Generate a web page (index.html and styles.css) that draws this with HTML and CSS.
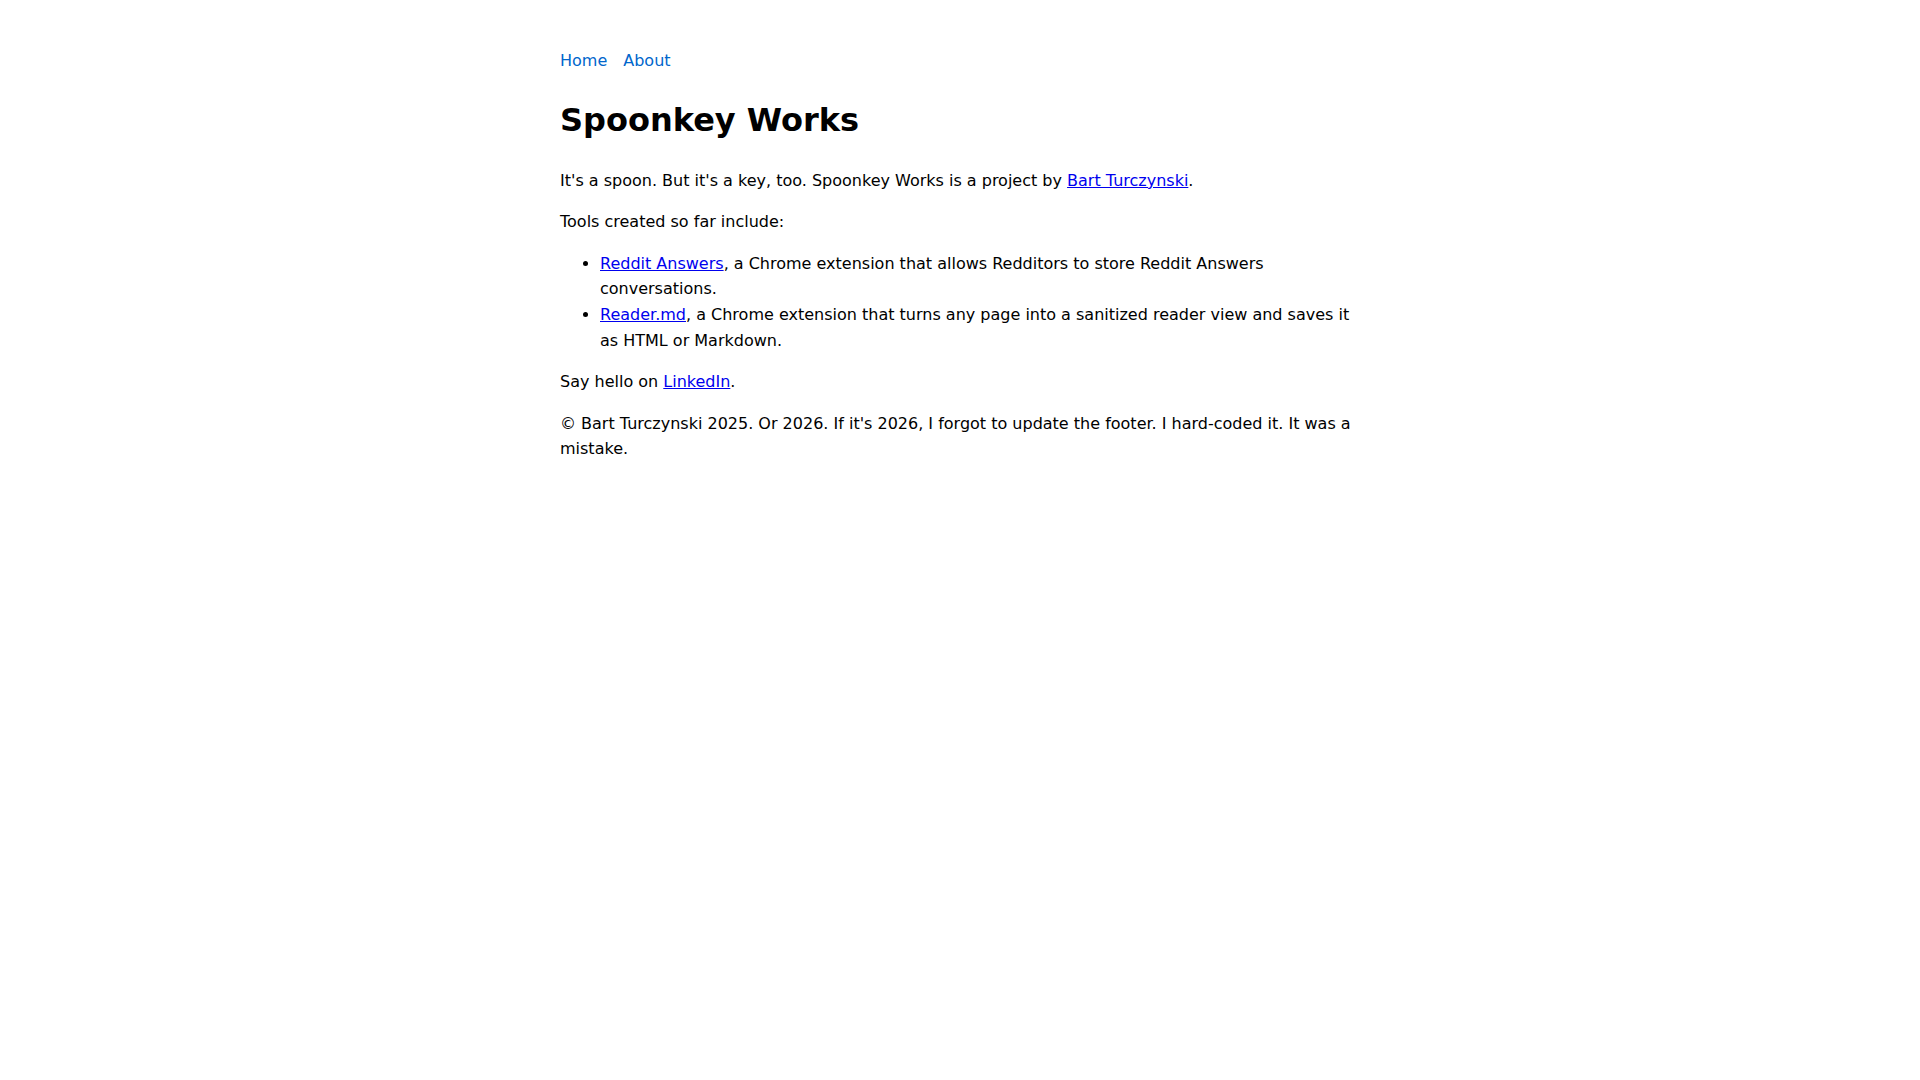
FILE: index.html
```html
<!DOCTYPE html>
<html lang="en">
<head>
<meta charset="utf-8">
<title>Spoonkey Works</title>
<link rel="stylesheet" href="styles.css">
</head>
<body>
<main class="page">
  <nav class="nav">
    <a class="nav-link" href="#">Home</a>
    <a class="nav-link" href="#">About</a>
  </nav>
  <h1 class="title">Spoonkey Works</h1>
  <p>It's a spoon. But it's a key, too. Spoonkey Works is a project by <a href="#">Bart Turczynski</a>.</p>
  <p>Tools created so far include:</p>
  <ul class="tools">
    <li><a href="#">Reddit Answers</a>, a Chrome extension that allows Redditors to store Reddit Answers conversations.</li>
    <li><a href="#">Reader.md</a>, a Chrome extension that turns any page into a sanitized reader view and saves it as HTML or Markdown.</li>
  </ul>
  <p>Say hello on <a href="#">LinkedIn</a>.</p>
  <footer class="footer">
    <p>© Bart Turczynski 2025. Or 2026. If it's 2026, I forgot to update the footer. I hard-coded it. It was a mistake.</p>
  </footer>
</main>
</body>
</html>
```

FILE: styles.css
```css
html, body {
  margin: 0;
  padding: 0;
  background: #fff;
}
body {
  font-family: "DejaVu Sans", sans-serif;
  font-size: 16px;
  line-height: 1.6;
  color: #000;
}
.page {
  max-width: 800px;
  margin: 0 auto;
  padding: 48px 0 32px;
}
.nav {
  display: flex;
  gap: 16px;
}
.nav-link {
  color: #0066cc;
  text-decoration: none;
}
.title {
  font-size: 32px;
  line-height: 1.6;
  margin: 21.4px 0;
}
p {
  margin: 16px 0;
}
a {
  color: #0000ee;
}
.tools {
  margin: 16px 0;
  padding-left: 40px;
}
.footer p {
  margin: 16px 0;
}
```
